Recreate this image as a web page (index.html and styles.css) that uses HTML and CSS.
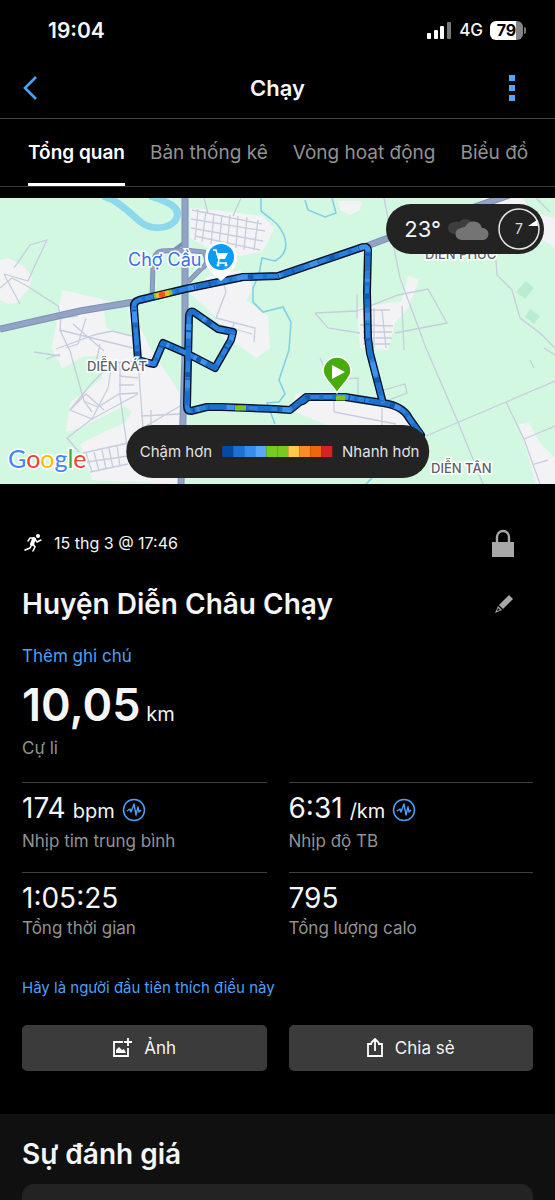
FILE: index.html
```html
<!DOCTYPE html>
<html lang="vi">
<head>
    <meta charset="UTF-8">
    <meta name="viewport" content="width=device-width, initial-scale=1.0">
    <title>Chạy</title>
    <link rel="stylesheet" href="styles.css">
</head>
<body>

    <!-- Status bar -->
    <div class="status-bar">
        <span class="clock">19:04</span>
        <div class="status-icons">
            <svg width="25" height="17" viewBox="0 0 25 17" fill="#fff">
                <rect x="0" y="11" width="4" height="6" rx="1"/>
                <rect x="7" y="8" width="4" height="9" rx="1"/>
                <rect x="13" y="4" width="4" height="13" rx="1"/>
                <rect x="20" y="0" width="4" height="17" rx="1" fill="#777"/>
            </svg>
            <span class="network">4G</span>
            <div class="battery"><span>79</span></div>
        </div>
    </div>

    <!-- Header -->
    <header class="header">
        <button class="icon-btn" aria-label="Quay lại">
            <svg width="16" height="26" viewBox="0 0 16 26"><path d="M14 2 L3 13 L14 24" fill="none" stroke="#4da0f5" stroke-width="2.6"/></svg>
        </button>
        <h1>Chạy</h1>
        <button class="icon-btn more" aria-label="Thêm">
            <svg width="6" height="26" viewBox="0 0 6 26" fill="#55a5f8"><path d="M0 0h6v6H0zM0 10h6v6H0zM0 20h6v6H0z"/></svg>
        </button>
    </header>

    <nav class="tabs">
        <a href="#" class="active">Tổng quan</a>
        <a href="#">Bản thống kê</a>
        <a href="#">Vòng hoạt động</a>
        <a href="#">Biểu đồ</a>
    </nav>

    <!-- Map -->
    <div class="map">
        <svg class="map-canvas" viewBox="0 0 555 286">
            <rect width="555" height="286" fill="#d3f8e2"/>

            <!-- built-up areas -->
            <g fill="#f3f3f6">
                <path d="M0 62 L8 60 L24 68 L32 80 L28 92 L16 105 L8 106 L0 102z"/>
                <path d="M62 92 L130 108 L150 150 L180 195 L181 286 L92 282 L80 246 L108 232 L125 225 L132 214 L124 208 L80 230 L66 234 L70 205 L103 180 L90 160 L62 170 L52 150z"/>
                <path d="M190 10 L215 12 L262 18 L275 30 L262 54 L240 58 L208 50 L190 40z"/>
                <path d="M208 78 L240 72 L254 90 L246 102 L268 118 L270 150 L256 160 L240 148 L222 140 L217 120 L190 95z"/>
                <path d="M338 3 L362 3 L360 12 L350 17 L340 12z"/>
                <path d="M357 110 L402 103 L408 78 L419 82 L408 110 L395 125 L388 152 L360 150z"/>
                <path d="M296 196 L326 193 L372 200 L402 210 L410 227 L330 228 L290 212z"/>
                <path d="M480 0 L523 0 L530 14 L555 20 L555 50 L540 40z"/>
                <path d="M519 226 L529 225 L540 245 L555 260 L555 286 L536 286 L528 258z"/>
            </g>
            <g fill="#d3f8e2">
                <path d="M104 113 L128 108 L132 138 L106 130z"/>
                <path d="M66 168 L84 158 L102 158 L106 172 L96 182 L84 192z"/>
            </g>
            <g fill="#b9ecd0">
                <path d="M251 83 l8 7 -9 11 -9 -7z" transform="translate(275 0)"/>
                <path d="M258 111 l10 7 -6 8 -9 -7z" transform="translate(272 0)"/>
            </g>

            <!-- water -->
            <path d="M103 -2 C122 4 132 18 142 25 C152 32 168 31 175 23 C183 11 172 5 150 -2" fill="none" stroke="#8ed8ee" stroke-width="7"/>
            <g fill="none" stroke="#82cfe8" stroke-width="1.6">
                <path d="M261 0 L261 13 L270 20 L277 26 C290 42 288 56 275 63 L262 60 L259 76 L253 90 L253 104 L263 114 L283 109 L291 124 L289 152 L279 182 L285 196 L279 204 L267 205 L275 226"/>
                <path d="M305 2 L308 12 L325 19 L336 15 L332 0"/>
                <path d="M372 280 L366 286"/>
            </g>

            <!-- minor streets -->
            <g fill="none" stroke="#c7cddc" stroke-width="1.3">
                <path d="M14 70 L30 47 L47 42 L37 63 L28 83 L4 76 M0 90 L12 80 L27 88 L58 108 L61 120 L78 118 M4 76 L20 106"/>
                <path d="M192 12 L262 26 M191 21 L265 33 M191 30 L263 43 M195 38 L260 52 M198 11 L195 42 M206 13 L202 44 M214 15 L211 46 M222 17 L219 47 M230 17 L227 49 M238 18 L236 50 M247 19 L244 52 M258 22 L254 52 M241 0 L233 18 M204 0 L208 15"/>
                <path d="M222 80 L226 94 L216 120 L255 130 L254 144 M217 126 L252 136 M234 125 L231 136"/>
                <path d="M61 117 L60 132 L70 153 L84 203 L92 214 M86 120 L78 146 L66 150 M60 132 L80 137 L133 150 M73 126 L104 153 M56 151 L94 137 L112 133 L132 138 M100 146 L96 164 M34 154 L60 158 M46 161 L60 156"/>
                <path d="M70 212 L92 185 L112 165 L138 163 M112 165 L108 190 L92 221 L70 212 L86 196 L104 212 M84 203 L98 209 L119 196 L138 195 M119 178 L138 180 M120 164 L120 198 L127 248 M119 187 L134 187 M92 221 L67 240 L79 254 M92 221 L138 196 M138 163 L143 230 L180 208 M141 218 L180 216 M151 212 L151 228"/>
                <path d="M83 255 L128 245 M87 264 L128 258 M90 274 L128 266 M86 255 L92 274 M94 254 L99 273 M102 252 L106 271 M109 250 L113 270 M117 248 L120 268"/>
                <path d="M315 115 L328 130 L360 135 M315 115 L357 113 L398 97 L428 91 L447 125 L395 135 M357 96 L357 120 M366 112 L390 112 M360 127 L393 128 M363 134 L392 134 M363 140 L392 140 M363 146 L390 146 M374 110 L374 150 M382 112 L386 150 M402 108 L404 152"/>
                <path d="M384 0 L400 80 L426 150 L458 224 L483 286 M426 238 L506 204 L555 183 M506 204 L524 241 L540 286 M524 241 L555 228 M534 266 L548 262 M536 0 L550 14"/>
                <path d="M496 62 L497 77 L512 92 L520 120 L540 135 L555 150 M544 150 L555 157 M330 182 L358 180 L358 198 M384 192 L405 186 L407 195 L386 203 M334 200 L334 214 L396 226 M382 210 L382 228 M320 160 L330 180 M530 162 L534 170"/>
            </g>

            <!-- highways -->
            <g fill="none" stroke="#7f90b6" stroke-width="7">
                <path d="M152 101 L153 66 Q154 54 162 53 L185 52 L204 54 Q210 66 202 70 L188 84" stroke-width="5"/>
                <path d="M174 52 L186 43" stroke-width="4"/>
                <path d="M185 0 L185 155 L181 286"/>
                <path d="M0 131 L80 113 L134 104 L185 91 L243 79 L278 78 L367 48 L420 28 L512 -4"/>
            </g>
            <g fill="none" stroke="#92a3c6" stroke-width="5">
                <path d="M152 101 L153 66 Q154 54 162 53 L185 52 L204 54 Q210 66 202 70 L188 84" stroke-width="3"/>
                <path d="M185 0 L185 155 L181 286"/>
                <path d="M0 131 L80 113 L134 104 L185 91 L243 79 L278 78 L367 48 L420 28 L512 -4"/>
            </g>

            <!-- place names -->
            <g class="place">
                <text class="place-market" x="128" y="68">Chợ Cầu</text>
                <text x="425" y="61">DIỄN PHÚC</text>
                <text x="431" y="275">DIỄN TÂN</text>
            </g>

            <!-- running track -->
            <defs>
                <path id="track" d="M421 237 L409 220 Q403 208 383 205 L345 199 L308 199 L303 203 L306 199 L290 212 L275 211 L222 209 L207 209 L191 213 Q187 213 187 208 L189 118 Q190 111 195 115 L218 131 L233 134 L231 142 L215 170 L186 155 L163 145 L154 166 L149 165 L138 162 L134 110 Q133 104 139 102 L185 91 L243 79 L278 78 L360 50 Q367 47 368 52 L367 94 L368 140 L370 155 L383 205"/>
            </defs>
            <g fill="none" stroke-linejoin="round">
                <use href="#track" stroke="#071526" stroke-width="8" stroke-linecap="round"/>
                <use href="#track" stroke="#2b80e0" stroke-width="5"/>
                <use href="#track" stroke="#1b6fcd" stroke-width="5" stroke-dasharray="14 9 4 17 22 12 3 8"/>
                <use href="#track" stroke="#3f92ee" stroke-width="5" stroke-dasharray="3 31 8 42 14 27"/>
                <use href="#track" stroke="#1557ab" stroke-width="5" stroke-dasharray="2 38 5 25 1 14"/>
                <path d="M154 98 L172 94" stroke="#8ac926" stroke-width="5"/>
                <path d="M156 98 L169 95" stroke="#ffb52e" stroke-width="5"/>
                <path d="M159 97 L165 96" stroke="#f4511e" stroke-width="5"/>
                <path d="M235 210 L246 210 M336 200 L345 200" stroke="#7ac520" stroke-width="5"/>
            </g>

            <text class="place" x="87" y="173">DIỄN CÁT</text>

            <!-- market marker -->
            <path d="M221 83 C214 77 205 71 205 60 A16 16 0 0 1 237 60 C237 71 228 77 221 83z" fill="#fff"/>
            <circle cx="221" cy="59" r="13" fill="#0d9bf3"/>
            <path d="M216 55 H228 L225 61 H218z" fill="#fff"/>
            <path d="M213 52 H216 L219 62 L218 65 H227" fill="none" stroke="#fff" stroke-width="1.5"/>
            <circle cx="218" cy="67" r="1.5" fill="#fff"/><circle cx="226" cy="67" r="1.5" fill="#fff"/>

            <!-- start marker -->
            <path d="M337 195 C333 187 323 181 323 173 A14 14 0 0 1 351 173 C351 181 341 187 337 195z" fill="#45ac0b" stroke="#fff" stroke-width="1.5"/>
            <path d="M332 167 L345 174 L332 181z" fill="#fff"/>

            <text class="google" x="8" y="270"><tspan fill="#4285f4">G</tspan><tspan fill="#ea4335">o</tspan><tspan fill="#fbbc05">o</tspan><tspan fill="#4285f4">g</tspan><tspan fill="#34a853">l</tspan><tspan fill="#ea4335">e</tspan></text>
        </svg>

        <div class="weather">
            <span>23°</span>
            <svg width="42" height="24" viewBox="0 0 42 24">
                <path d="M6 17 a6 6 0 0 1 0 -12 a6 6 0 0 1 5 0 a8 8 0 0 1 14 3 L12 17z" fill="#3e3e3e"/>
                <path d="M14 23 a6 6 0 0 1 -1 -12 a6 6 0 0 1 4 -1 a9 9 0 0 1 17 1 a6 6 0 0 1 1 12z" fill="#747474"/>
            </svg>
            <svg width="44" height="44" viewBox="0 0 44 44">
                <circle cx="22" cy="22" r="20" fill="none" stroke="#e6e6e6" stroke-width="1.5"/>
                <path d="M31 19 L40 13 L41 19z" fill="#fff"/>
                <text class="wind" x="22" y="27" text-anchor="middle">7</text>
            </svg>
        </div>

        <div class="legend">
            <span>Chậm hơn</span>
            <div class="scale">
                <i class="c1"></i><i class="c2"></i><i class="c3"></i><i class="c4"></i><i class="c5"></i>
                <i class="c5"></i><i class="c6"></i><i class="c7"></i><i class="c8"></i><i class="c9"></i>
            </div>
            <span>Nhanh hơn</span>
        </div>
    </div>

    <!-- Activity summary -->
    <main class="summary">
        <div class="row date-row">
            <svg width="20" height="20" viewBox="0 0 20 20">
                <circle cx="14" cy="3" r="2" fill="#fff"/>
                <g fill="none" stroke="#fff" stroke-linecap="round" stroke-linejoin="round">
                    <path d="M10 6 L8 11" stroke-width="4"/>
                    <path d="M9 5 L6 5 L4 8 M11 6 L13 9 L17 7" stroke-width="1.4"/>
                    <path d="M8 11 L6 15 L1 17 M9 11 L11 14 L9 18" stroke-width="1.6"/>
                </g>
            </svg>
            <span class="date">15 thg 3 @ 17:46</span>
            <svg class="right lock" width="22" height="28" viewBox="0 0 22 28"><path d="M5 14 V8 a6 6 0 0 1 12 0 V14" fill="none" stroke="#a8a8a8" stroke-width="2.4"/><rect x="0" y="13" width="22" height="15" fill="#a8a8a8"/></svg>
        </div>

        <div class="row title-row">
            <h2>Huyện Diễn Châu Chạy</h2>
            <button class="icon-btn right" aria-label="Sửa tên">
                <svg width="18" height="18" viewBox="0 0 18 18" fill="#a8a8a8"><path d="M14 0 L18 4 L8 14 L4 10z"/><path d="M3 11 L7 15 L0 18z M3 13 L2 16 L5 15z" fill-rule="evenodd"/></svg>
            </button>
        </div>

        <a href="#" class="note">Thêm ghi chú</a>

        <div class="distance"><b>10,05</b> km</div>
        <div class="label">Cự li</div>

        <div class="stats">
            <div class="stat">
                <div class="value">174 <small>bpm</small>
                    <svg width="24" height="24" viewBox="0 0 24 24" fill="none" stroke="#4da0f5"><circle cx="12" cy="12" r="10.5" stroke-width="1.5"/><path d="M5 13 L8 11 L9 14 L12 6 L14 17 L16 9 L17 14 L19 12" stroke-width="1.4" stroke-linejoin="round"/></svg>
                </div>
                <div class="label">Nhịp tim trung bình</div>
            </div>
            <div class="stat">
                <div class="value">6:31 <small>/km</small>
                    <svg width="24" height="24" viewBox="0 0 24 24" fill="none" stroke="#4da0f5"><circle cx="12" cy="12" r="10.5" stroke-width="1.5"/><path d="M5 13 L8 11 L9 14 L12 6 L14 17 L16 9 L17 14 L19 12" stroke-width="1.4" stroke-linejoin="round"/></svg>
                </div>
                <div class="label">Nhịp độ TB</div>
            </div>
            <div class="stat">
                <div class="value">1:05:25</div>
                <div class="label">Tổng thời gian</div>
            </div>
            <div class="stat">
                <div class="value">795</div>
                <div class="label">Tổng lượng calo</div>
            </div>
        </div>

        <a href="#" class="like">Hãy là người đầu tiên thích điều này</a>

        <div class="actions">
            <button>
                <svg width="20" height="20" viewBox="0 0 20 20" fill="none" stroke="#fff" stroke-width="1.8"><path d="M11 4 H2 V18 H16 V10 M12 4 H20 M16 0 V8"/><path d="M4 15 V12 L7 9 L10 12 L12 11 L14 15z" fill="#fff" stroke="none"/></svg>
                Ảnh
            </button>
            <button>
                <svg width="16" height="20" viewBox="0 0 16 20" fill="none" stroke="#fff" stroke-width="1.8"><path d="M5 6 H1 V18 H15 V6 H11 M8 13 V2 M4 5 L8 1 L12 5"/></svg>
                Chia sẻ
            </button>
        </div>
    </main>

    <section class="rating">
        <h2>Sự đánh giá</h2>
        <div class="card"></div>
    </section>

</body>
</html>
```
FILE: styles.css
```css
* {
    box-sizing: border-box;
}

body {
    margin: 0;
    min-height: 100vh;
    display: flex;
    flex-direction: column;
    font-family: Inter, "Liberation Sans", sans-serif;
    background-color: #000;
    color: #f5f5f5;
}

h1, h2 {
    margin: 0;
    font-weight: 600;
}

a {
    color: #4da0f5;
    text-decoration: none;
}

button {
    font-family: inherit;
    color: inherit;
    border: none;
    cursor: pointer;
}

svg {
    display: block;
    flex-shrink: 0;
}

.icon-btn {
    display: flex;
    padding: 0;
    background: none;
}

/* Status bar */
.status-bar {
    display: flex;
    justify-content: space-between;
    align-items: center;
    height: 60px;
    padding: 0 32px 0 48px;
}

.clock {
    font-size: 21px;
    font-weight: 600;
}

.status-icons {
    display: flex;
    align-items: center;
    gap: 7px;
}

.network {
    font-size: 17px;
    font-weight: 500;
}

.battery {
    position: relative;
    width: 33px;
    height: 19px;
    border-radius: 6px;
    background: linear-gradient(to right, #fff 79%, #858585 79%);
    color: #000;
    font-size: 16px;
    font-weight: 700;
    line-height: 19px;
    text-align: center;
}

.battery::after {
    content: "";
    position: absolute;
    right: -3px;
    top: 6px;
    width: 2px;
    height: 7px;
    border-radius: 0 2px 2px 0;
    background-color: #777;
}

/* Header */
.header {
    display: grid;
    grid-template-columns: 1fr auto 1fr;
    align-items: center;
    height: 59px;
    padding: 0 22px 2px;
    border-bottom: 1px solid #444;
}

.header h1 {
    font-size: 22px;
}

.more {
    justify-self: end;
    padding-right: 18px;
}

.tabs {
    display: flex;
    gap: 25px;
    height: 68px;
    padding: 0 25px 0 28px;
    border-bottom: 1px solid #383838;
    white-space: nowrap;
}

.tabs a {
    color: #929292;
    font-size: 19px;
    line-height: 68px;
}

.tabs .active {
    color: #fff;
    font-weight: 600;
    border-bottom: 3px solid #fff;
}

/* Map */
.map {
    position: relative;
    margin-top: 11px;
}

.map-canvas {
    width: 100%;
    height: auto;
}

.place {
    font-size: 13px;
    font-weight: 500;
    fill: #5e6166;
    stroke: #fff;
    stroke-width: 3px;
    paint-order: stroke;
}

.place-market {
    font-size: 18px;
    font-weight: 400;
    fill: #3972e0;
}

.google {
    font-family: Lato, sans-serif;
    font-size: 25px;
    stroke: #fff;
    stroke-width: 3px;
    paint-order: stroke;
}

.weather, .legend {
    position: absolute;
    display: flex;
    align-items: center;
    background-color: #232323;
    border-radius: 27px;
}

.weather {
    top: 6px;
    right: 11px;
    height: 50px;
    gap: 7px;
    padding: 0 3px 0 18px;
    font-size: 22px;
}

.wind {
    font-size: 14px;
    fill: #ddd;
}

.legend {
    left: 50%;
    bottom: 6px;
    transform: translateX(-50%);
    height: 53px;
    gap: 10px;
    padding: 0 10px 0 14px;
    font-size: 15px;
    color: #e2e2e2;
    white-space: nowrap;
}

.scale {
    display: flex;
}

.scale i {
    width: 11px;
    height: 11px;
}

.c1 { background-color: #07499f; }
.c2 { background-color: #1c72d4; }
.c3 { background-color: #368df0; }
.c4 { background-color: #5aa8fc; }
.c5 { background-color: #7ac920; }
.c6 { background-color: #fdca4d; }
.c7 { background-color: #fb8b29; }
.c8 { background-color: #ec670d; }
.c9 { background-color: #d62222; }

/* Summary */
.summary {
    padding: 44px 22px 43px;
}

.row {
    display: flex;
    align-items: center;
}

.right {
    margin-left: auto;
}

.date-row {
    height: 30px;
    padding: 0 19px 0 2px;
}

.date {
    margin-left: 10px;
    font-size: 16px;
}

.title-row {
    margin-top: 26px;
    padding-right: 20px;
}

.title-row h2, .rating h2 {
    font-size: 28px;
    line-height: 40px;
}

.note {
    display: block;
    margin-top: 20px;
    font-size: 17px;
    line-height: 24px;
}

.distance {
    margin-top: 15px;
    font-size: 20px;
    line-height: 44px;
}

.distance b {
    font-size: 45px;
    font-weight: 600;
}

.label {
    color: #929292;
    font-size: 17px;
    line-height: 24px;
}

.stats {
    display: grid;
    grid-template-columns: 1fr 1fr;
    column-gap: 22px;
    margin-top: 22px;
}

.stat {
    height: 90px;
    padding-top: 7px;
    border-top: 1px solid #404040;
}

.value {
    display: flex;
    align-items: baseline;
    gap: 7px;
    font-size: 28px;
    line-height: 36px;
}

.value small {
    font-size: 20px;
}

.value svg {
    align-self: center;
}

.like {
    display: block;
    margin-top: 14px;
    font-size: 15px;
    line-height: 24px;
}

.actions {
    display: grid;
    grid-template-columns: 1fr 1fr;
    gap: 22px;
    margin-top: 25px;
}

.actions button {
    display: flex;
    justify-content: center;
    align-items: center;
    gap: 12px;
    height: 46px;
    border-radius: 5px;
    background-color: #3b3b3b;
    font-size: 17px;
}

/* Rating */
.rating {
    flex: 1;
    display: flex;
    flex-direction: column;
    padding: 20px 22px 0;
    background-color: #101010;
}

.card {
    flex: 1;
    min-height: 16px;
    margin-top: 10px;
    border-radius: 12px 12px 0 0;
    background-color: #232323;
}
```
